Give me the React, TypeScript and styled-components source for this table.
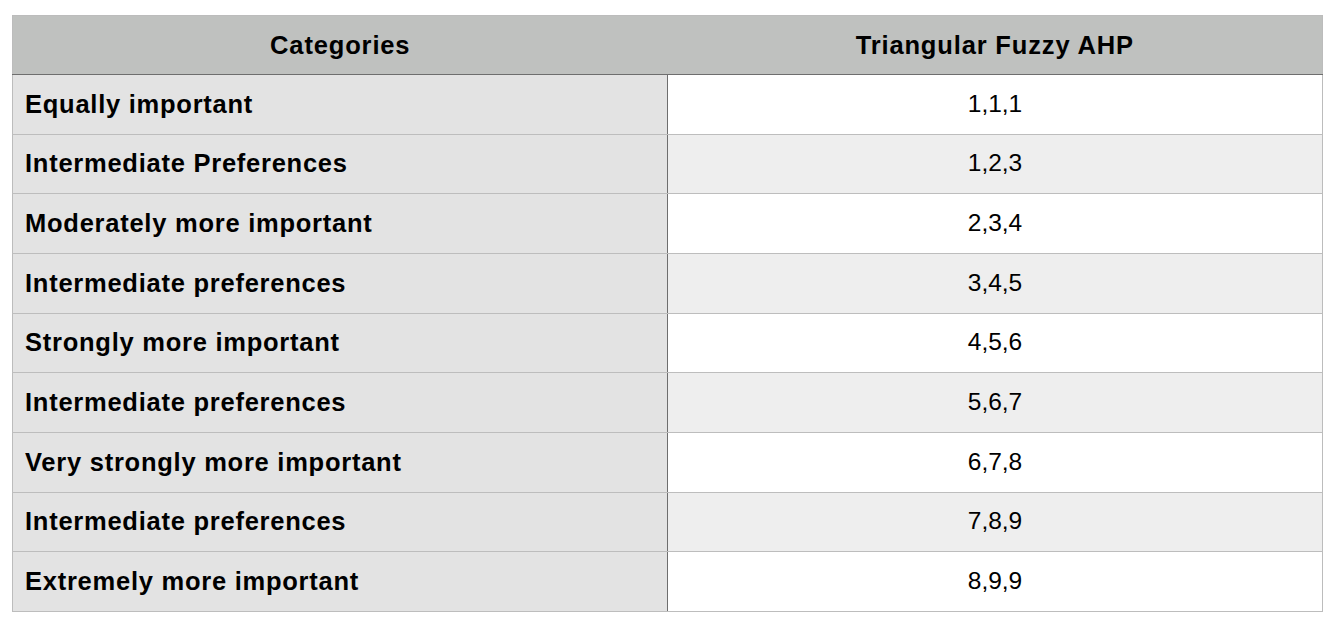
import React from "react";
import styled, { createGlobalStyle } from "styled-components";

const GlobalStyle = createGlobalStyle`
  html, body { margin: 0; padding: 0; background: #ffffff; }
  body { font-family: "Liberation Sans", Arial, Helvetica, sans-serif; }
`;

const Page = styled.div`
  width: 1336px;
  height: 632px;
  padding: 15px 0 0 12px;
  box-sizing: border-box;
`;

const Table = styled.table`
  width: 1311px;
  border-collapse: collapse;
  table-layout: fixed;
  border: 1px solid #bcbcbc;
  font-family: "Liberation Sans", Arial, Helvetica, sans-serif;
  font-size: 24.5px;
  line-height: 28px;
  color: #000;
`;

const HeadCell = styled.th`
  height: 58px;
  padding: 0;
  background: #bfc1bf;
  font-size: 25.5px;
  font-weight: 700;
  letter-spacing: 0.85px;
  text-align: center;
  border-bottom: 1px solid #6e6e6e;
`;

const Row = styled.tr<{ $alt: boolean }>`
  height: 59.67px;
  td:last-child {
    background: ${(p) => (p.$alt ? "#eeeeee" : "#ffffff")};
  }
`;

const LabelCell = styled.td`
  padding: 0 0 1px 12px;
  background: #e3e3e3;
  font-size: 25.5px;
  font-weight: 700;
  letter-spacing: 0.75px;
  text-align: left;
  border-right: 1px solid #6e6e6e;
  border-bottom: 1px solid #bdbdbd;
  white-space: nowrap;
`;

const ValueCell = styled.td`
  padding: 0 0 1px 0;
  text-align: center;
  border-bottom: 1px solid #bdbdbd;
`;

const rows: [string, string][] = [
  ["Equally important", "1,1,1"],
  ["Intermediate Preferences", "1,2,3"],
  ["Moderately more important", "2,3,4"],
  ["Intermediate preferences", "3,4,5"],
  ["Strongly more important", "4,5,6"],
  ["Intermediate preferences", "5,6,7"],
  ["Very strongly more important", "6,7,8"],
  ["Intermediate preferences", "7,8,9"],
  ["Extremely more important", "8,9,9"],
];

export default function App() {
  return (
    <>
      <GlobalStyle />
      <Page>
        <Table>
          <colgroup>
            <col style={{ width: "655px" }} />
            <col />
          </colgroup>
          <thead>
            <tr>
              <HeadCell>Categories</HeadCell>
              <HeadCell>Triangular Fuzzy AHP</HeadCell>
            </tr>
          </thead>
          <tbody>
            {rows.map(([label, value], i) => (
              <Row key={i} $alt={i % 2 === 1}>
                <LabelCell>{label}</LabelCell>
                <ValueCell>{value}</ValueCell>
              </Row>
            ))}
          </tbody>
        </Table>
      </Page>
    </>
  );
}
